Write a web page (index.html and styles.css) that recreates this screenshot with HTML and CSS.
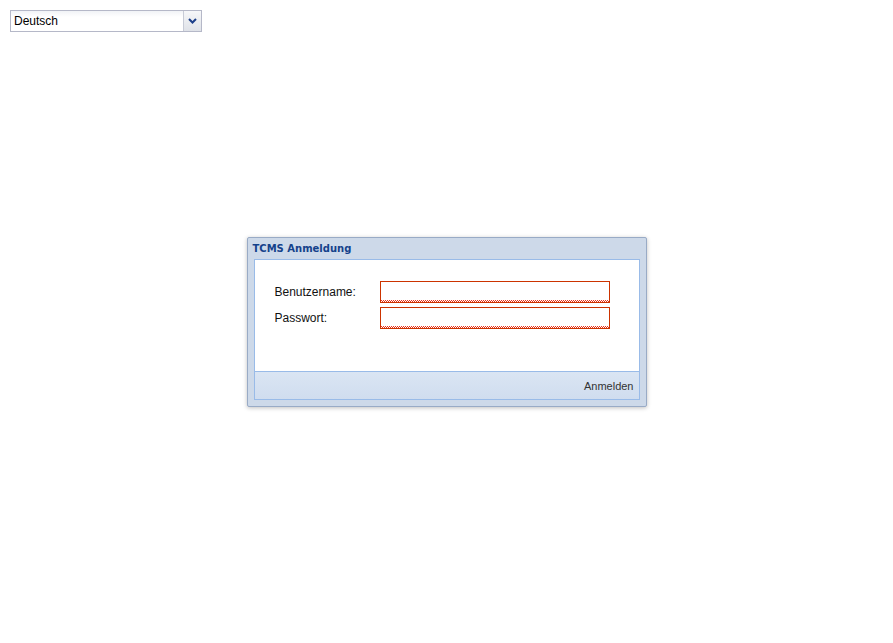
FILE: index.html
```html
<!DOCTYPE html>
<html lang="de">
<head>
  <meta charset="UTF-8">
  <title>TCMS Anmeldung</title>
  <link rel="stylesheet" href="styles.css">
</head>
<body>
  <div class="lang-combo">
    <span class="lang-value">Deutsch</span>
    <span class="lang-trigger">
      <svg width="9" height="6" viewBox="0 0 9 6"><path d="M1 1 L4.5 4.5 L8 1" fill="none" stroke="#1c3f8a" stroke-width="2"/></svg>
    </span>
  </div>

  <!-- Anmeldefenster -->
  <div class="login-window">
    <div class="win-header">TCMS Anmeldung</div>
    <div class="win-body">
      <form class="login-form">
        <div class="form-row">
          <label for="benutzer">Benutzername:</label>
          <input type="text" id="benutzer" class="field invalid" autofocus>
        </div>
        <div class="form-row">
          <label for="passwort">Passwort:</label>
          <input type="password" id="passwort" class="field invalid">
        </div>
      </form>
      <div class="win-footer">
        <button type="button" class="login-btn">Anmelden</button>
      </div>
    </div>
  </div>
</body>
</html>
```

FILE: styles.css
```css
/* Grundlayout */
body {
  margin: 0;
  padding: 10px;
  font-family: 'DejaVu Sans', Tahoma, sans-serif;
  font-size: 12px;
  color: #000;
  background: #fff;
}
/* Sprachauswahl oben links */
.lang-combo {
  display: flex;
  width: 190px;
  height: 20px;
  border: 1px solid #b5b8c8;
  background: linear-gradient(#f1f3f6, #fff 6px);
}
.lang-value {
  flex: 1;
  padding-left: 3px;
  line-height: 20px;
  font-family: 'Liberation Sans', Arial, sans-serif;
  font-size: 12px;
}
.lang-trigger {
  width: 17px;
  border-left: 1px solid #c7cbd6;
  background: linear-gradient(#f6f7f9, #dfe2e8);
  display: flex;
  align-items: center;
  justify-content: center;
}
/* Fenster */
.login-window {
  width: 400px;
  box-sizing: border-box;
  margin: 205px auto 0;
  border: 1px solid #99abc6;
  border-radius: 2px;
  background: #cdd9e9;
  box-shadow: 0 1px 4px rgba(0,0,0,0.25);
  padding: 0 6px 6px;
}
.win-header {
  height: 21px;
  line-height: 21px;
  font-size: 10px;
  font-weight: bold;
  color: #15428b;
  margin-left: -1px;
}
.win-body {
  border: 1px solid #99bbe8;
  background: #fff;
}
.login-form {
  height: 111px;
  padding: 21px 0 0 20px;
  box-sizing: border-box;
}
.form-row {
  display: flex;
  align-items: center;
  margin-bottom: 4px;
}
.form-row label {
  width: 105px;
  font-family: 'Liberation Sans', Arial, sans-serif;
  font-size: 12px;
  color: #111;
}
.field {
  width: 230px;
  height: 22px;
  box-sizing: border-box;
  margin: 0;
  padding: 1px 3px;
  font-size: 12px;
  border: 1px solid #cc3300;
  outline: none;
  background-color: #fff;
}
/* roter Wellenstrich bei ungueltiger Eingabe */
.field.invalid {
  background-image:
    repeating-linear-gradient(90deg, #e8331a 0 1px, transparent 1px 2px),
    repeating-linear-gradient(90deg, transparent 0 1px, #e8331a 1px 2px);
  background-size: 100% 1px, 100% 1px;
  background-position: left bottom 1px, left bottom;
  background-repeat: no-repeat;
}
.win-footer {
  height: 27px;
  border-top: 1px solid #99bbe8;
  background: linear-gradient(#dae5f3, #d0ddef);
  display: flex;
  align-items: center;
  justify-content: flex-end;
  padding-right: 5px;
}
.login-btn {
  border: none;
  background: none;
  padding: 0;
  font-family: 'Liberation Sans', Arial, sans-serif;
  font-size: 11px;
  color: #333;
  cursor: pointer;
}
```
